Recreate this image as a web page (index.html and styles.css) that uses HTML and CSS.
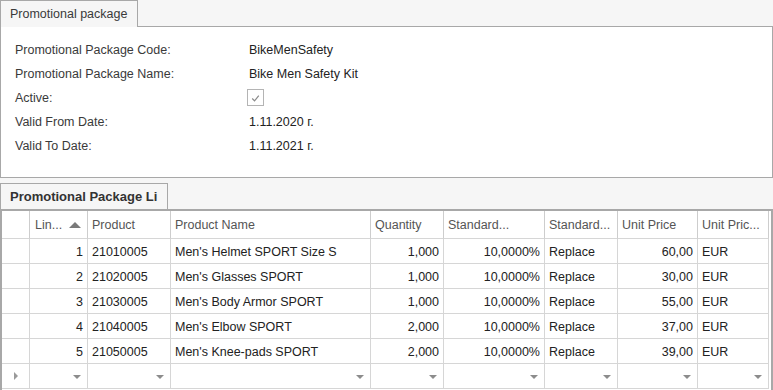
FILE: index.html
```html
<!DOCTYPE html>
<html lang="en">
<head>
    <meta charset="UTF-8">
    <title>Promotional package</title>
    <link rel="stylesheet" href="styles.css">
</head>
<body>
    <div class="tab-strip">
        <div class="tab">Promotional package</div>
        <div class="tab-filler"></div>
    </div>
    <section class="details-panel">
        <div class="field-row"><span class="field-label">Promotional Package Code:</span><span class="field-value">BikeMenSafety</span></div>
        <div class="field-row"><span class="field-label">Promotional Package Name:</span><span class="field-value">Bike Men Safety Kit</span></div>
        <div class="field-row">
            <span class="field-label">Active:</span>
            <span class="field-value">
                <span class="check-box">
                    <svg viewBox="0 0 16 16" width="16" height="16"><polyline points="4.5,8.5 7,11 11.5,5.5" fill="none" stroke="#8a8a8a" stroke-width="1.3"></polyline></svg>
                </span>
            </span>
        </div>
        <div class="field-row"><span class="field-label">Valid From Date:</span><span class="field-value">1.11.2020 г.</span></div>
        <div class="field-row"><span class="field-label">Valid To Date:</span><span class="field-value">1.11.2021 г.</span></div>
    </section>

    <div class="tab-strip lines-strip">
        <div class="tab bold-tab">Promotional Package Li</div>
    </div>
    <section class="grid">
        <div class="grid-row grid-header">
            <div class="cell"></div>
            <div class="cell sorted"><span>Lin...</span><i class="sort-up"></i></div>
            <div class="cell">Product</div>
            <div class="cell">Product Name</div>
            <div class="cell">Quantity</div>
            <div class="cell">Standard...</div>
            <div class="cell">Standard...</div>
            <div class="cell">Unit Price</div>
            <div class="cell">Unit Pric...</div>
        </div>
        <div class="grid-row">
            <div class="cell"></div><div class="cell num">1</div><div class="cell">21010005</div><div class="cell">Men's Helmet SPORT Size S</div><div class="cell num">1,000</div><div class="cell num">10,0000%</div><div class="cell">Replace</div><div class="cell num">60,00</div><div class="cell">EUR</div>
        </div>
        <div class="grid-row">
            <div class="cell"></div><div class="cell num">2</div><div class="cell">21020005</div><div class="cell">Men's Glasses SPORT</div><div class="cell num">1,000</div><div class="cell num">10,0000%</div><div class="cell">Replace</div><div class="cell num">30,00</div><div class="cell">EUR</div>
        </div>
        <div class="grid-row">
            <div class="cell"></div><div class="cell num">3</div><div class="cell">21030005</div><div class="cell">Men's Body Armor SPORT</div><div class="cell num">1,000</div><div class="cell num">10,0000%</div><div class="cell">Replace</div><div class="cell num">55,00</div><div class="cell">EUR</div>
        </div>
        <div class="grid-row">
            <div class="cell"></div><div class="cell num">4</div><div class="cell">21040005</div><div class="cell">Men's Elbow SPORT</div><div class="cell num">2,000</div><div class="cell num">10,0000%</div><div class="cell">Replace</div><div class="cell num">37,00</div><div class="cell">EUR</div>
        </div>
        <div class="grid-row">
            <div class="cell"></div><div class="cell num">5</div><div class="cell">21050005</div><div class="cell">Men's Knee-pads SPORT</div><div class="cell num">2,000</div><div class="cell num">10,0000%</div><div class="cell">Replace</div><div class="cell num">39,00</div><div class="cell">EUR</div>
        </div>
        <div class="grid-row new-row">
            <div class="cell indicator"><i class="row-arrow"></i></div>
            <div class="cell drop"><i></i></div>
            <div class="cell drop"><i></i></div>
            <div class="cell drop"><i></i></div>
            <div class="cell drop"><i></i></div>
            <div class="cell drop"><i></i></div>
            <div class="cell drop"><i></i></div>
            <div class="cell drop"><i></i></div>
            <div class="cell drop"><i></i></div>
        </div>
    </section>
</body>
</html>
```

FILE: styles.css
```css
:root {
    --page-bg: #f6f6f6;
    --frame-border: #a8a8a8;
    --grid-line: #d6d6d6;
    --label-color: #3a3a3a;
    --text-color: #222;
    --font-ui: 'Liberation Sans', Arial, sans-serif;
}
* { margin: 0; padding: 0; box-sizing: border-box; }
body { font-family: var(--font-ui); font-size: 12.5px; color: var(--text-color); background: var(--page-bg); width: 773px; height: 390px; overflow: hidden; }

/* Tabs */
.tab-strip { display: flex; height: 27px; }
.tab { width: 138px; height: 27px; border: 1px solid var(--frame-border); border-bottom: none; padding: 6px 0 0 9px; color: var(--label-color); background: var(--page-bg); }
.tab-filler { flex: 1; border-bottom: 1px solid var(--frame-border); }
.lines-strip { margin-top: 5px; height: 26px; }
.bold-tab { width: 168px; height: 26px; font-weight: 700; font-size: 13px; color: #333; padding: 5px 0 0 9px; }

/* Details panel */
.details-panel { height: 151px; background: #fff; border: 1px solid var(--frame-border); border-top: none; padding: 11px 0 0 14px; }
.field-row { display: flex; align-items: center; height: 24px; }
.field-label { width: 234px; color: var(--label-color); }
.field-value { color: var(--text-color); display: flex; align-items: center; }
.check-box { width: 17px; height: 17px; border: 1px solid #b4b4b4; background: #fff; display: flex; align-items: center; justify-content: center; margin: -1px 0 0 -2px; }
.check-box svg { display: block; }

/* Grid */
.grid { background: #fff; border: 2px solid var(--frame-border); border-bottom: none; height: 182px; }
.grid-row { display: grid; grid-template-columns: 28px 58px 83px 200px 73px 101px 73px 80px 71px; height: 25px; }
.cell { border-right: 1px solid var(--grid-line); border-bottom: 1px solid var(--grid-line); padding: 1px 4px 0; display: flex; align-items: center; white-space: nowrap; overflow: hidden; }
.cell.num { justify-content: flex-end; }
.grid-row > .cell:first-child { padding: 0; }

.grid-header { height: 28px; }
.grid-header .cell { color: #555; padding: 0 5px; border-right-color: #cdcdcd; }
.grid-header .cell:nth-child(n+3) { padding-left: 4px; }
.sorted { justify-content: space-between; }
.sort-up { width: 0; height: 0; border-left: 6px solid transparent; border-right: 6px solid transparent; border-bottom: 6px solid #7a7a7a; margin-right: 1px; }

.new-row .drop { justify-content: flex-end; padding-right: 6px; }
.new-row .drop i { width: 0; height: 0; border-left: 4px solid transparent; border-right: 4px solid transparent; border-top: 4px solid #8c8c8c; }
.new-row .indicator { justify-content: center; padding-right: 2px; }
.row-arrow { width: 0; height: 0; border-top: 4px solid transparent; border-bottom: 4px solid transparent; border-left: 4px solid #9a9a9a; }
```
